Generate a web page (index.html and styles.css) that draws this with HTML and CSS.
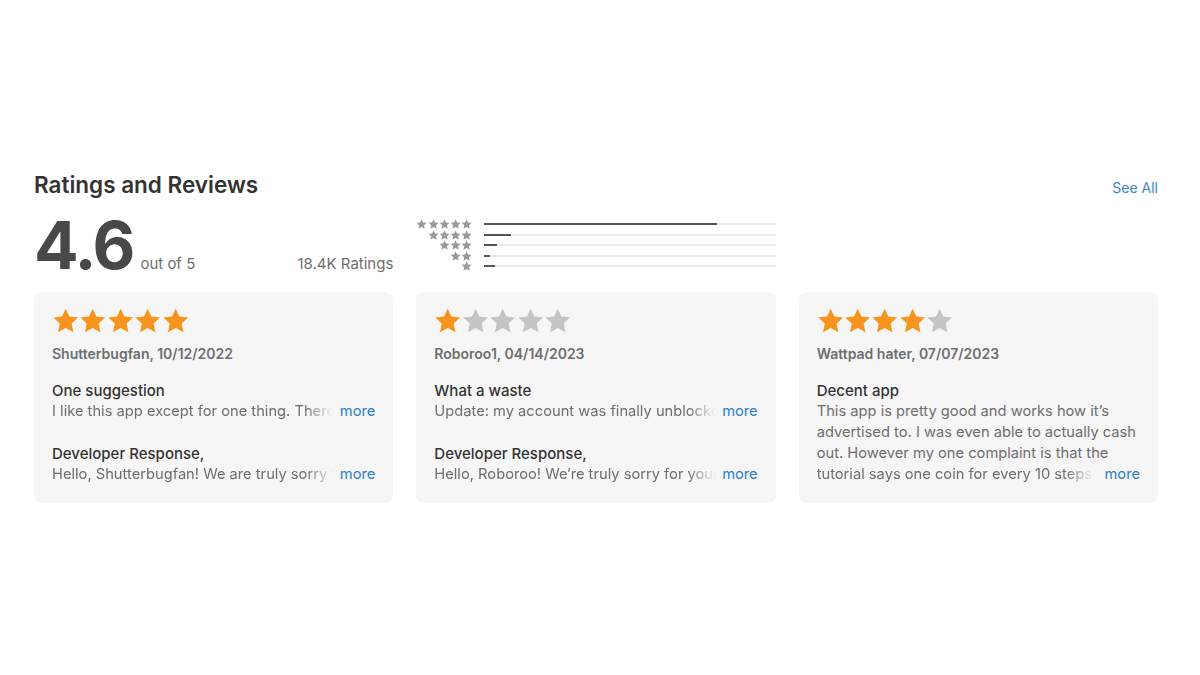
FILE: index.html
```html
<!DOCTYPE html>
<html lang="en">
<head>
  <meta charset="UTF-8">
  <title>Ratings and Reviews</title>
  <link rel="stylesheet" href="styles.css">
</head>
<body>
  <svg width="0" height="0" class="defs">
    <symbol id="star" viewBox="0 0 24 24">
      <polygon points="12,0.6 15.4,7.8 23.4,8.8 17.5,14.3 19.1,22.4 12,18.5 4.9,22.4 6.5,14.3 0.6,8.8 8.6,7.8"/>
    </symbol>
  </svg>

  <section class="reviews">
    <div class="reviews-head">
      <h2>Ratings and Reviews</h2>
      <a class="see-all" href="#">See All</a>
    </div>

    <div class="summary">
      <div class="score">
        <span class="score-num">4.6</span>
        <span class="score-out">out of 5</span>
        <span class="score-count">18.4K Ratings</span>
      </div>

      <div class="histogram">
        <div class="hist-row">
          <span class="hist-stars"><svg><use href="#star"/></svg><svg><use href="#star"/></svg><svg><use href="#star"/></svg><svg><use href="#star"/></svg><svg><use href="#star"/></svg></span>
          <span class="hist-track"><span class="hist-fill" style="width: 80%"></span></span>
        </div>
        <div class="hist-row">
          <span class="hist-stars"><svg><use href="#star"/></svg><svg><use href="#star"/></svg><svg><use href="#star"/></svg><svg><use href="#star"/></svg></span>
          <span class="hist-track"><span class="hist-fill" style="width: 9%"></span></span>
        </div>
        <div class="hist-row">
          <span class="hist-stars"><svg><use href="#star"/></svg><svg><use href="#star"/></svg><svg><use href="#star"/></svg></span>
          <span class="hist-track"><span class="hist-fill" style="width: 4.5%"></span></span>
        </div>
        <div class="hist-row">
          <span class="hist-stars"><svg><use href="#star"/></svg><svg><use href="#star"/></svg></span>
          <span class="hist-track"><span class="hist-fill" style="width: 1.8%"></span></span>
        </div>
        <div class="hist-row">
          <span class="hist-stars"><svg><use href="#star"/></svg></span>
          <span class="hist-track"><span class="hist-fill" style="width: 3.8%"></span></span>
        </div>
      </div>
    </div>

    <div class="cards">
      <div class="card">
        <div class="card-stars">
          <svg class="on"><use href="#star"/></svg><svg class="on"><use href="#star"/></svg><svg class="on"><use href="#star"/></svg><svg class="on"><use href="#star"/></svg><svg class="on"><use href="#star"/></svg>
        </div>
        <div class="card-author">Shutterbugfan, 10/12/2022</div>
        <div class="card-title">One suggestion</div>
        <div class="card-line"><span class="fade">I like this app except for one thing. There</span><a class="more" href="#">more</a></div>
        <div class="card-title gap">Developer Response,</div>
        <div class="card-line"><span class="fade">Hello, Shutterbugfan! We are truly sorry for</span><a class="more" href="#">more</a></div>
      </div>

      <div class="card">
        <div class="card-stars">
          <svg class="on"><use href="#star"/></svg><svg><use href="#star"/></svg><svg><use href="#star"/></svg><svg><use href="#star"/></svg><svg><use href="#star"/></svg>
        </div>
        <div class="card-author">Roboroo1, 04/14/2023</div>
        <div class="card-title">What a waste</div>
        <div class="card-line"><span class="fade">Update: my account was finally unblocked</span><a class="more" href="#">more</a></div>
        <div class="card-title gap">Developer Response,</div>
        <div class="card-line"><span class="fade">Hello, Roboroo! We’re truly sorry for your</span><a class="more" href="#">more</a></div>
      </div>

      <div class="card">
        <div class="card-stars">
          <svg class="on"><use href="#star"/></svg><svg class="on"><use href="#star"/></svg><svg class="on"><use href="#star"/></svg><svg class="on"><use href="#star"/></svg><svg><use href="#star"/></svg>
        </div>
        <div class="card-author">Wattpad hater, 07/07/2023</div>
        <div class="card-title">Decent app</div>
        <div class="card-text">This app is pretty good and works how it’s</div>
        <div class="card-text">advertised to. I was even able to actually cash</div>
        <div class="card-text">out. However my one complaint is that the</div>
        <div class="card-line"><span class="fade">tutorial says one coin for every 10 steps.</span><a class="more" href="#">more</a></div>
      </div>
    </div>
  </section>
</body>
</html>
```

FILE: styles.css
```css
body { margin: 0; background: #fff; color: #333; font-family: Inter, "Noto Sans", sans-serif; }
.defs { position: absolute; }

.reviews { padding: 171px 42px 0 34px; }
.reviews-head { display: flex; justify-content: space-between; align-items: baseline; }
.reviews-head h2 { margin: 0; font-size: 22.5px; font-weight: 600; line-height: 28px; color: #333; }
.see-all { font-size: 14px; color: #3c86c6; text-decoration: none; }

.summary { display: grid; grid-template-columns: repeat(3, minmax(0, 1fr)); gap: 23px; margin-top: 14px; }
.score { display: flex; align-items: baseline; }
.score-num { font-size: 66px; line-height: 65px; font-weight: 700; color: #48484a; letter-spacing: -2px; }
.score-out { font-size: 15px; color: #6e6e6e; margin-left: 7px; }
.score-count { font-size: 15px; color: #6e6e6e; margin-left: auto; }

.histogram { margin-top: 6px; }
.hist-row { display: grid; grid-template-columns: 56px 1fr; gap: 12px; align-items: center; height: 10.5px; }
.hist-stars { display: flex; justify-content: flex-end; }
.hist-stars svg { width: 11.2px; height: 10.5px; fill: #9a9a9a; }
.hist-track { display: block; height: 2px; background: #ebebeb; }
.hist-fill { display: block; height: 2px; background: #555; }

.cards { display: grid; grid-template-columns: repeat(3, minmax(0, 1fr)); gap: 23px; margin-top: 14px; }
.card { background: #f6f6f6; border-radius: 8px; padding: 16px 18px 18px; font-size: 14.7px; line-height: 21px; }
.card-stars { display: flex; height: 26px; margin-bottom: 11px; }
.card-stars svg { width: 27.4px; height: 26px; fill: #c4c4c4; }
.card-stars svg.on { fill: #f7941d; }
.card-author { font-size: 14px; line-height: 18px; font-weight: 600; color: #6e6e6e; margin-bottom: 17px; }
.card-title { font-size: 15px; font-weight: 500; color: #333; }
.card-title.gap { margin-top: 21px; }
.card-text { color: #6e6e6e; white-space: nowrap; }
.card-line { display: flex; color: #6e6e6e; }
.fade { flex: 0 1 auto; min-width: 0; overflow: hidden; white-space: nowrap;
  -webkit-mask-image: linear-gradient(to right, #000 calc(100% - 30px), transparent calc(100% - 2px));
  mask-image: linear-gradient(to right, #000 calc(100% - 30px), transparent calc(100% - 2px)); }
.more { color: #2f7ec4; text-decoration: none; margin-left: auto; padding-left: 4px; }
```
